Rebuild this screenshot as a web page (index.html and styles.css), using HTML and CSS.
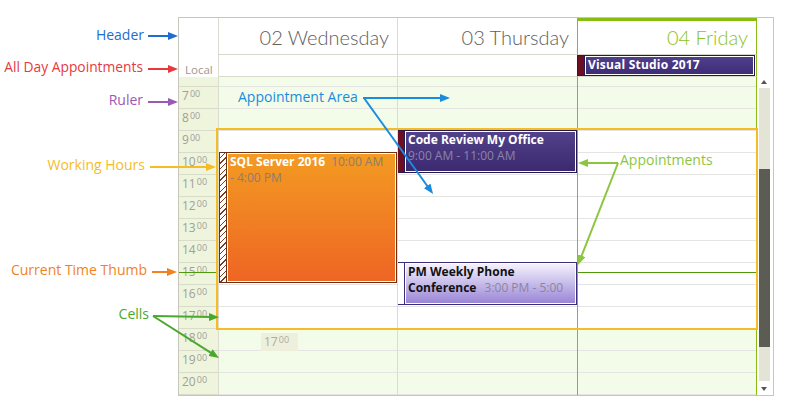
FILE: index.html
```html
<!DOCTYPE html>
<html>
<head>
<meta charset="utf-8">
<title>Scheduler anatomy</title>
<link rel="stylesheet" href="styles.css">
</head>
<body>
<div class="page">
  <div class="scheduler">
    <div class="hdr">
      <div class="ruler-h"></div>
      <div class="day-h">02 Wednesday</div>
      <div class="day-h">03 Thursday</div>
      <div class="day-h today">04 Friday</div>
      <div class="sb-h"></div>
    </div>
    <div class="allday">
      <div class="ruler-a"><span>Local</span></div>
      <div class="day-a"></div>
      <div class="day-a"></div>
      <div class="day-a today">
        <div class="appt vs"><i class="bar"></i><div class="bd"><b>Visual Studio 2017</b></div></div>
      </div>
      <div class="sb-a"></div>
    </div>
    <div class="main">
      <div class="ruler">
        <div class="rc p"></div>
        <div class="rc">7<span class="mm">00</span></div>
        <div class="rc">8<span class="mm">00</span></div>
        <div class="rc">9<span class="mm">00</span></div>
        <div class="rc">10<span class="mm">00</span></div>
        <div class="rc">11<span class="mm">00</span></div>
        <div class="rc">12<span class="mm">00</span></div>
        <div class="rc">13<span class="mm">00</span></div>
        <div class="rc">14<span class="mm">00</span></div>
        <div class="rc">15<span class="mm">00</span></div>
        <div class="rc">16<span class="mm">00</span></div>
        <div class="rc">17<span class="mm">00</span></div>
        <div class="rc">18<span class="mm">00</span></div>
        <div class="rc">19<span class="mm">00</span></div>
        <div class="rc">20<span class="mm">00</span></div>
        <div class="now"></div>
      </div>
      <div class="col">
        <div class="cell p"></div><div class="cell"></div><div class="cell"></div>
        <div class="cell w"></div><div class="cell w"></div><div class="cell w"></div><div class="cell w"></div><div class="cell w"></div><div class="cell w"></div><div class="cell w"></div><div class="cell w"></div><div class="cell w"></div>
        <div class="cell"></div><div class="cell"></div><div class="cell"></div>
        <div class="appt sql"><i class="bar"></i><div class="bd"><div class="txt"><b>SQL Server 2016</b><span class="t">10:00 AM</span><br><span class="t0">- 4:00 PM</span></div></div></div>
        <div class="cue">17<span class="mm">00</span></div>
      </div>
      <div class="col">
        <div class="cell p"></div><div class="cell"></div><div class="cell"></div>
        <div class="cell w"></div><div class="cell w"></div><div class="cell w"></div><div class="cell w"></div><div class="cell w"></div><div class="cell w"></div><div class="cell w"></div><div class="cell w"></div><div class="cell w"></div>
        <div class="cell"></div><div class="cell"></div><div class="cell"></div>
        <div class="appt cr"><i class="bar"></i><div class="bd"><div class="txt"><b>Code Review My Office</b><br><span class="t0">9:00 AM - 11:00 AM</span></div></div></div>
        <div class="appt pm"><i class="bar"></i><div class="bd"><div class="txt"><b>PM Weekly Phone Conference</b> <span class="t">3:00 PM - 5:00 PM</span></div></div></div>
      </div>
      <div class="col today">
        <div class="cell p"></div><div class="cell"></div><div class="cell"></div>
        <div class="cell w"></div><div class="cell w"></div><div class="cell w"></div><div class="cell w"></div><div class="cell w"></div><div class="cell w"></div><div class="cell w"></div><div class="cell w"></div><div class="cell w"></div>
        <div class="cell"></div><div class="cell"></div><div class="cell"></div>
        <div class="now"></div>
      </div>
      <div class="sb">
        <span class="arr up"></span>
        <div class="track"><div class="thumb"></div></div>
        <span class="arr down"></span>
      </div>
    </div>
  </div>

  <div class="wh-box"></div>

  <svg class="arrows" width="804" height="420" viewBox="0 0 804 420">
    <defs>
      <marker id="m-blue" markerUnits="userSpaceOnUse" markerWidth="10" markerHeight="8" refX="2" refY="4" orient="auto"><path d="M0,0 L10,4 L0,8 z" fill="#1f6dcf"/></marker>
      <marker id="m-red" markerUnits="userSpaceOnUse" markerWidth="10" markerHeight="8" refX="2" refY="4" orient="auto"><path d="M0,0 L10,4 L0,8 z" fill="#e8393e"/></marker>
      <marker id="m-purple" markerUnits="userSpaceOnUse" markerWidth="10" markerHeight="8" refX="2" refY="4" orient="auto"><path d="M0,0 L10,4 L0,8 z" fill="#9b59b6"/></marker>
      <marker id="m-yellow" markerUnits="userSpaceOnUse" markerWidth="10" markerHeight="8" refX="2" refY="4" orient="auto"><path d="M0,0 L10,4 L0,8 z" fill="#f4bd27"/></marker>
      <marker id="m-orange" markerUnits="userSpaceOnUse" markerWidth="10" markerHeight="8" refX="2" refY="4" orient="auto"><path d="M0,0 L10,4 L0,8 z" fill="#f0821f"/></marker>
      <marker id="m-green" markerUnits="userSpaceOnUse" markerWidth="10" markerHeight="8" refX="2" refY="4" orient="auto"><path d="M0,0 L10,4 L0,8 z" fill="#4ba82f"/></marker>
      <marker id="m-sky" markerUnits="userSpaceOnUse" markerWidth="10" markerHeight="8" refX="2" refY="4" orient="auto"><path d="M0,0 L10,4 L0,8 z" fill="#1a8ce0"/></marker>
      <marker id="m-lime" markerUnits="userSpaceOnUse" markerWidth="10" markerHeight="8" refX="2" refY="4" orient="auto"><path d="M0,0 L10,4 L0,8 z" fill="#8cc63f"/></marker>
    </defs>
    <g stroke-width="2" fill="none">
      <line x1="148" y1="36" x2="170" y2="36" stroke="#1f6dcf" marker-end="url(#m-blue)"/>
      <line x1="148" y1="69" x2="170" y2="69" stroke="#e8393e" marker-end="url(#m-red)"/>
      <line x1="148" y1="102" x2="170" y2="102" stroke="#9b59b6" marker-end="url(#m-purple)"/>
      <line x1="150" y1="167" x2="208" y2="167" stroke="#f4bd27" marker-end="url(#m-yellow)"/>
      <line x1="152" y1="272" x2="169" y2="272" stroke="#f0821f" marker-end="url(#m-orange)"/>
      <line x1="153" y1="316" x2="211" y2="317" stroke="#4ba82f" marker-end="url(#m-green)"/>
      <line x1="153" y1="316" x2="212.2" y2="353.7" stroke="#4ba82f" marker-end="url(#m-green)"/>
      <line x1="363" y1="98" x2="442" y2="98" stroke="#1a8ce0" marker-end="url(#m-sky)"/>
      <line x1="364" y1="98" x2="428.4" y2="187.5" stroke="#1a8ce0" marker-end="url(#m-sky)"/>
      <line x1="618" y1="163" x2="586" y2="163" stroke="#8cc63f" marker-end="url(#m-lime)"/>
      <line x1="618" y1="163" x2="580.9" y2="257.6" stroke="#8cc63f" marker-end="url(#m-lime)"/>
    </g>
  </svg>

  <span class="ann a-header">Header</span>
  <span class="ann a-allday">All Day Appointments</span>
  <span class="ann a-ruler">Ruler</span>
  <span class="ann a-work">Working Hours</span>
  <span class="ann a-now">Current Time Thumb</span>
  <span class="ann a-cells">Cells</span>
  <span class="ann a-area">Appointment Area</span>
  <span class="ann a-appts">Appointments</span>
</div>
</body>
</html>
```

FILE: styles.css
```css
* { box-sizing: border-box; }

body {
  margin: 0;
  background: #fff;
  font-family: "Open Sans", "Noto Sans", sans-serif;
}

.page {
  position: relative;
  width: 804px;
  height: 420px;
  padding: 17px 0 0 178px;
  overflow: hidden;
}

/* ---------- scheduler frame ---------- */
.scheduler {
  width: 596px;
  height: 379px;
  border: 1px solid #c6c6ba;
  background: #fff;
  display: flex;
  flex-direction: column;
}

.hdr, .allday, .main {
  display: grid;
  grid-template-columns: 39px 179px 180px 180px 16px;
}
.hdr { height: 37px; }
.allday { height: 22px; }
.main { height: 318px; overflow: hidden; }

/* header */
.day-h {
  border-left: 1px solid #dcdcd2;
  border-bottom: 1px solid #d6d6cc;
  padding: 6px 8px 0 0;
  text-align: right;
  font-family: "Lato", "Open Sans", sans-serif;
  font-size: 20px;
  font-weight: 300;
  line-height: 27px;
  color: #5e5e5e;
  white-space: nowrap;
}
.day-h.today {
  color: #8cc21c;
  box-shadow: inset 0 3px 0 #86bd10;
}
.today {
  border-left: 1px solid #86bd10;
  border-right: 1px solid #86bd10;
}

/* all-day row */
.ruler-a {
  display: flex;
  align-items: flex-end;
  padding: 0 0 0 6px;
  font-size: 11.5px;
  line-height: 14px;
  color: #a0968c;
}
.day-a {
  position: relative;
  border-left: 1px solid #dcdcd2;
  border-bottom: 1px solid #d9d9d0;
}
.day-a.today { border-left-color: #86bd10; }

/* ruler */
.ruler {
  position: relative;
  background: #eff4dc;
}
.rc {
  height: 22px;
  border-bottom: 1px solid #d8dcc8;
  padding-left: 3px;
  font-size: 12px;
  line-height: 14px;
  color: #a0a09a;
}
.rc.p { height: 10px; }
.mm {
  font-size: 9px;
  vertical-align: 3px;
  margin-left: 1px;
}

/* day columns */
.col {
  position: relative;
  border-left: 1px solid #dcdcd2;
  overflow: hidden;
}
.col.today { border-left-color: #86bd10; }
.cell {
  height: 22px;
  border-bottom: 1px solid #e4e4e2;
  background: #f3fbe9;
}
.cell.p { height: 10px; }
.cell.w { background: #fff; }

.now {
  position: absolute;
  left: 0;
  right: 0;
  top: 195px;
  height: 1px;
  background: #4f9a0c;
}

/* drag cue */
.cue {
  position: absolute;
  left: 42px;
  top: 256px;
  width: 37px;
  height: 18px;
  padding-left: 3px;
  background: #eef0dc;
  color: #acaca4;
  font-size: 12px;
  line-height: 14px;
}

/* appointments */
.appt {
  position: absolute;
  display: flex;
  overflow: hidden;
  border: 1px solid #24194f;
}
.appt .bar {
  flex: none;
  width: 7px;
  border-right: 1px solid #24194f;
  background: #6d0f22;
}
.appt .bd {
  flex: 1;
  min-width: 0;
  overflow: hidden;
  border: 1px solid #fff;
  padding: 0 2px;
  font-size: 12px;
  line-height: 16px;
  color: #fff;
}
.appt .txt { overflow: hidden; }
.appt b { font-weight: 700; }
.appt .t { margin-left: 5px; }

.vs {
  left: -1px;
  right: 1px;
  top: 0;
  bottom: 0;
}
.vs .bd { background: linear-gradient(#4f3f8b, #3e2c75); }
.vs b { letter-spacing: 0.2px; }

.cr {
  left: -1px;
  right: 0;
  top: 53px;
  height: 43px;
}
.cr .bd { background: linear-gradient(#524289, #3b2971); }
.cr .t0 { color: #8a85a8; }

.pm {
  left: -1px;
  right: 0;
  top: 185px;
  height: 43px;
  border-color: #3b2c7c;
}
.pm .bar { background: #fff; border-right-color: #3b2c7c; }
.pm .bd {
  background: linear-gradient(#f4f1fd, #9a86d6);
  color: #111;
}
.pm .txt { height: 32px; }
.pm .t { color: #8a859f; }

.sql {
  left: 0;
  right: 0;
  top: 75px;
  height: 131px;
  border-color: #6d3014;
}
.sql .bar {
  border-right-color: #6d3014;
  background: repeating-linear-gradient(135deg, #fff 0 3px, #7a3a1c 3px 4px);
}
.sql .bd { background: linear-gradient(#f39b22, #ee6524); }
.sql .t { margin-left: 6px; color: #8e7c6e; }
.sql .t0 { color: #8e7c6e; }

/* scrollbar */
.sb {
  display: flex;
  flex-direction: column;
  align-items: flex-start;
  padding: 3px 0 0 2px;
}
.arr {
  width: 0;
  height: 0;
  margin-left: 2px;
  border-left: 3.5px solid transparent;
  border-right: 3.5px solid transparent;
}
.arr.up { border-bottom: 4px solid #55554f; margin-bottom: 4px; }
.arr.down { border-top: 4px solid #55554f; margin-top: 6px; }
.track {
  width: 11px;
  height: 293px;
  background: #e3e4d5;
}
.thumb {
  margin-top: 81px;
  height: 178px;
  background: #5b5c53;
}

/* working-hours highlight */
.wh-box {
  position: absolute;
  left: 216px;
  top: 128px;
  width: 542px;
  height: 202px;
  border: 2px solid #f4bd27;
}

/* annotations */
.arrows {
  position: absolute;
  left: 0;
  top: 0;
}
.ann {
  position: absolute;
  font-size: 14px;
  line-height: 20px;
  white-space: nowrap;
}
.a-header { right: 660px; top: 25px; color: #1f6dcf; }
.a-allday { right: 661px; top: 57px; color: #e8393e; font-size: 13.8px; }
.a-ruler { right: 661px; top: 90px; color: #9b59b6; }
.a-work { right: 659px; top: 155px; color: #f4bd27; }
.a-now { right: 657px; top: 260px; color: #f0821f; }
.a-cells { right: 655px; top: 304px; color: #4ba82f; }
.a-area { left: 238px; top: 87px; color: #1a8ce0; }
.a-appts { left: 620px; top: 150px; color: #8cc63f; }
```
